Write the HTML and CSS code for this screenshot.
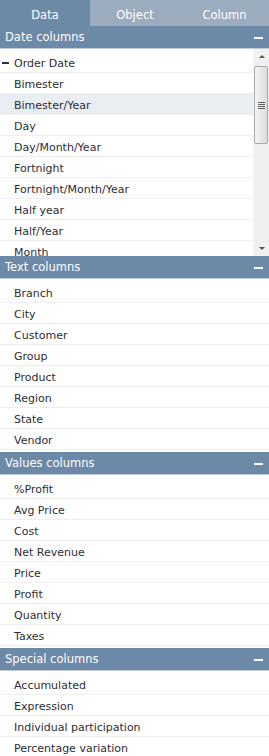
FILE: index.html
```html
<!DOCTYPE html>
<html>
  <head>
    <title>Fields</title>
    <link rel="stylesheet" href="styles.css">
  </head>
  <body>
    <div class="tabs">
      <div class="tab active">Data</div>
      <div class="tab">Object</div>
      <div class="tab">Column</div>
    </div>

    <div class="section">
      <div class="section-header">Date columns <span class="collapse"></span></div>
      <div class="scroll-list">
        <div class="items">
          <div class="row expanded"><span class="minus"></span>Order Date</div>
          <div class="row">Bimester</div>
          <div class="row selected">Bimester/Year</div>
          <div class="row">Day</div>
          <div class="row">Day/Month/Year</div>
          <div class="row">Fortnight</div>
          <div class="row">Fortnight/Month/Year</div>
          <div class="row">Half year</div>
          <div class="row">Half/Year</div>
          <div class="row">Month</div>
        </div>
        <div class="scrollbar">
          <div class="arrow up"></div>
          <div class="track">
            <div class="thumb"><span class="grip"></span></div>
          </div>
          <div class="arrow down"></div>
        </div>
      </div>
    </div>

    <div class="section">
      <div class="section-header">Text columns <span class="collapse"></span></div>
      <div class="list">
        <div class="row">Branch</div>
        <div class="row">City</div>
        <div class="row">Customer</div>
        <div class="row">Group</div>
        <div class="row">Product</div>
        <div class="row">Region</div>
        <div class="row">State</div>
        <div class="row">Vendor</div>
      </div>
    </div>

    <div class="section">
      <div class="section-header">Values columns <span class="collapse"></span></div>
      <div class="list">
        <div class="row">%Profit</div>
        <div class="row">Avg Price</div>
        <div class="row">Cost</div>
        <div class="row">Net Revenue</div>
        <div class="row">Price</div>
        <div class="row">Profit</div>
        <div class="row">Quantity</div>
        <div class="row">Taxes</div>
      </div>
    </div>

    <div class="section">
      <div class="section-header">Special columns <span class="collapse"></span></div>
      <div class="list">
        <div class="row">Accumulated</div>
        <div class="row">Expression</div>
        <div class="row">Individual participation</div>
        <div class="row">Percentage variation</div>
      </div>
    </div>
  </body>
</html>
```

FILE: styles.css
```css
body {
  font-family: "DejaVu Sans", Verdana, sans-serif;
  font-size: 11px;
  color: #2d2d35;
  background-color: #fff;
  margin: 0;
  padding: 0;
  width: 269px;
  height: 756px;
  overflow: hidden;
}

.tabs {
  display: flex;
  height: 26px;
  background-color: #9cacbf;
}

.tab {
  width: 90px;
  line-height: 30px;
  text-align: center;
  color: #fff;
  font-size: 11.5px;
}

.tab:last-child {
  width: 89px;
}

.tab.active {
  background-color: #6d89a8;
}

.section-header {
  display: flex;
  align-items: center;
  justify-content: space-between;
  height: 22px;
  padding: 0 6px 0 5px;
  background-color: #6d89a8;
  border-bottom: 1px solid #bfcbd8;
  color: #fff;
  font-size: 11.5px;
  line-height: 25px;
}

.collapse {
  width: 9px;
  height: 2px;
  margin-top: 1px;
  background-color: #fff;
}

.list {
  padding: 3px 0 2px;
}

.row {
  height: 20px;
  line-height: 24px;
  padding-left: 14px;
  border-bottom: 1px solid #efefef;
  white-space: nowrap;
}

.row.expanded {
  padding-left: 2px;
}

.row.selected {
  background-color: #e9eef3;
}

.minus {
  display: inline-block;
  width: 7px;
  height: 2px;
  margin-right: 5px;
  vertical-align: 3px;
  background-color: #2d2d35;
}

.scroll-list {
  display: flex;
  height: 207px;
  overflow: hidden;
}

.scroll-list .items {
  flex: 1;
  padding-top: 3px;
  overflow: hidden;
}

.scrollbar {
  width: 15px;
  display: flex;
  flex-direction: column;
  background-color: #f0f0f0;
  border-left: 1px solid #f7f7f7;
}

.arrow {
  height: 15px;
  display: flex;
  align-items: center;
  justify-content: center;
}

.arrow::after {
  content: "";
  border-left: 3px solid transparent;
  border-right: 3px solid transparent;
}

.arrow.up::after {
  border-bottom: 3px solid #555;
}

.arrow.down::after {
  border-top: 3px solid #555;
}

.track {
  flex: 1;
  padding-top: 2px;
}

.thumb {
  height: 76px;
  margin: 0 1px 0 0;
  border: 1px solid #a9a9a9;
  border-radius: 2px;
  background: linear-gradient(to right, #f4f4f4, #dcdcdc);
  display: flex;
  align-items: center;
  justify-content: center;
}

.grip {
  width: 7px;
  height: 7px;
  background: repeating-linear-gradient(to bottom, #666 0, #666 1px, transparent 1px, transparent 2px);
}
```
